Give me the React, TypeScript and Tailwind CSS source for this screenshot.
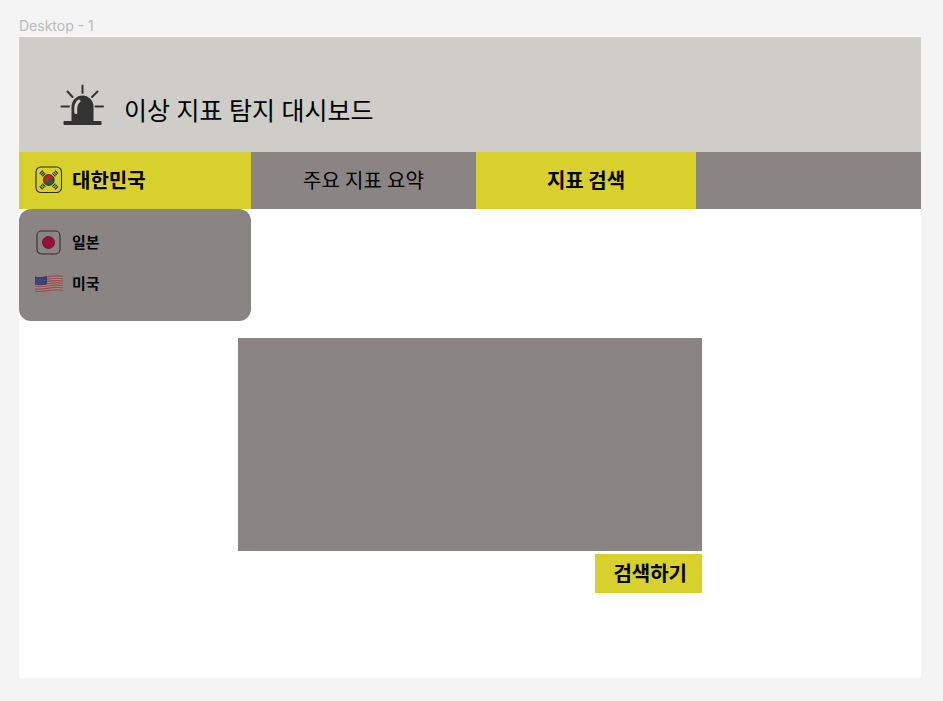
import React from "react";

function SirenIcon() {
  return (
    <svg viewBox="0 0 44 42" className="h-[42px] w-11 shrink-0" aria-hidden="true">
      <g stroke="#333333" strokeWidth="2" strokeLinecap="round" fill="none">
        <path d="M22.500 1.500v7.500M7.500 7.500l5 5.500M37.500 7.500l-5.500 5.500M1.500 22.500h7.500M35.500 22.500h7.500" />
      </g>
      <path d="M11.500 37V23a11 11.500 0 0 1 22 0V37z" fill="#333333" />
      <rect x="3.500" y="37" width="38" height="4" rx="1" fill="#333333" />
      <path d="M19 17c-3 2-3.700 5-3.200 11.500" stroke="#cecdc7" strokeWidth="3" strokeLinecap="round" fill="none" />
    </svg>
  );
}

function KoreaFlag() {
  return (
    <svg viewBox="0 0 28 28" className="h-7 w-7 shrink-0" aria-hidden="true">
      <rect x="1" y="1" width="25.500" height="25.500" rx="5" fill="none" stroke="#2b2a12" strokeWidth="1.100" />
      <g transform="rotate(15 13.800 14)">
        <circle cx="13.800" cy="14" r="5.400" fill="#22633f" />
        <path d="M8.400 14a5.400 5.400 0 0 1 10.800 0a2.700 2.700 0 0 0-5.400 0a2.700 2.700 0 0 1-5.400 0z" fill="#c8202f" />
        <circle cx="13.800" cy="14" r="5.400" fill="none" stroke="#2b2a12" strokeWidth="0.800" />
      </g>
      <g stroke="#2b2a12" strokeWidth="1.200">
        <path d="M4.700 7.700l3-3M6 9l3-3M7.300 10.300l3-3" />
        <path d="M20 4.700l3 3M18.700 6l1.300 1.300M20.400 7.700l1.300 1.300M17.400 7.300l3 3" />
        <path d="M4.700 20.300l3 3M6 19l1.300 1.300M7.700 20.700l1.300 1.300M7.300 17.700l3 3" />
        <path d="M20 23.300l3-3M18.700 22l1.300-1.300M20.400 20.300l1.300-1.300M17.400 20.700l3-3" />
      </g>
    </svg>
  );
}

function JapanFlag() {
  return (
    <svg viewBox="0 0 28 26" className="h-[26px] w-7 shrink-0" aria-hidden="true">
      <rect x="2" y="1" width="23" height="23" rx="4.500" fill="none" stroke="#2d2f2f" strokeWidth="1.100" />
      <circle cx="13.500" cy="12.500" r="6" fill="#9c0f39" stroke="#3d1c27" strokeWidth="0.800" />
    </svg>
  );
}

function UsaFlag() {
  return (
    <svg viewBox="0 0 28 20" className="h-5 w-7 shrink-0" aria-hidden="true">
      <path d="M0 2.500C8 5 17-.5 28 2v14.500C18 14.500 10 20 0 17.500z" fill="#a08d8b" />
      <g stroke="#9b4a48" strokeWidth="1.200" fill="none">
        <path d="M0 3C8 5.500 17 0 28 2.500" />
        <path d="M0 5.300C8 7.800 17 2.300 28 4.800" />
        <path d="M0 7.600C8 10.100 17 4.600 28 7.100" />
        <path d="M0 9.900C8 12.400 17 6.900 28 9.400" />
        <path d="M0 12.200C8 14.700 17 9.200 28 11.700" />
        <path d="M0 14.500C8 17 17 11.500 28 14" />
        <path d="M0 16.800C8 19.300 17 13.800 28 16.300" />
      </g>
      <path d="M0 2.500c4 1.200 8 .5 12-.6v8.300c-4 1-8 1.600-12 .6z" fill="#3b3c73" />
      <g fill="#716f92">
        <circle cx="2" cy="5" r=".5" /><circle cx="5" cy="5.300" r=".5" /><circle cx="8" cy="5" r=".5" />
        <circle cx="3.500" cy="7" r=".5" /><circle cx="6.500" cy="7" r=".5" /><circle cx="9.500" cy="6.500" r=".5" />
        <circle cx="2" cy="9" r=".5" /><circle cx="5" cy="9.200" r=".5" /><circle cx="8" cy="8.800" r=".5" />
      </g>
    </svg>
  );
}

const countries = [
  { name: "일본", Flag: JapanFlag },
  { name: "미국", Flag: UsaFlag },
];

export default function App() {
  return (
    <div className="min-h-screen bg-[#f4f4f4] pt-4 pr-[22px] pb-[22px] pl-[19px] font-['Noto_Sans_CJK_KR','Noto_Sans',sans-serif] text-black">
      <p className="h-[21px] font-[Inter,sans-serif] text-sm leading-5 text-[#b9b9b9]">Desktop - 1</p>
      <main className="bg-white pb-[85px]">
        <header className="flex items-center gap-5 bg-[#cecdc7] px-[41px] pt-[47px] pb-[26px]">
          <SirenIcon />
          <h1 className="pt-2.5 font-['Noto_Sans','Noto_Sans_CJK_KR',sans-serif] text-[25px] leading-8">이상 지표 탐지 대시보드</h1>
        </header>
        <nav className="grid h-[57px] grid-cols-[232fr_225fr_220fr_225fr] bg-[#8a8583] text-xl">
          <button type="button" aria-expanded="true" className="flex items-center gap-[9px] bg-[#d7d02d] px-4 pb-0.5 text-left font-bold">
            <KoreaFlag />
            대한민국
          </button>
          <button type="button" className="font-['Noto_Sans','Noto_Sans_CJK_KR',sans-serif]">주요 지표 요약</button>
          <button type="button" className="bg-[#d7d02d] pb-0.5 font-bold">지표 검색</button>
        </nav>
        <div className="grid grid-cols-[232fr_670fr]">
          <ul className="flex h-[112px] flex-col gap-4 rounded-xl bg-[#8a8583] px-4 pt-[21px]">
            {countries.map(({ name, Flag }) => (
              <li key={name}>
                <button type="button" className="flex h-[25px] items-center gap-[9px] text-[15px] font-bold">
                  <Flag />
                  {name}
                </button>
              </li>
            ))}
          </ul>
        </div>
        <form className="mx-auto mt-[17px] flex max-w-[464px] flex-col items-end gap-[3px]" onSubmit={(e) => e.preventDefault()}>
          <textarea aria-label="지표 검색" className="block h-[213px] w-full resize-none bg-[#8a8583] p-4 outline-none" />
          <button type="submit" className="h-[39px] bg-[#d7d02d] pr-[15px] pb-0.5 pl-[18px] text-xl font-bold">검색하기</button>
        </form>
      </main>
    </div>
  );
}
